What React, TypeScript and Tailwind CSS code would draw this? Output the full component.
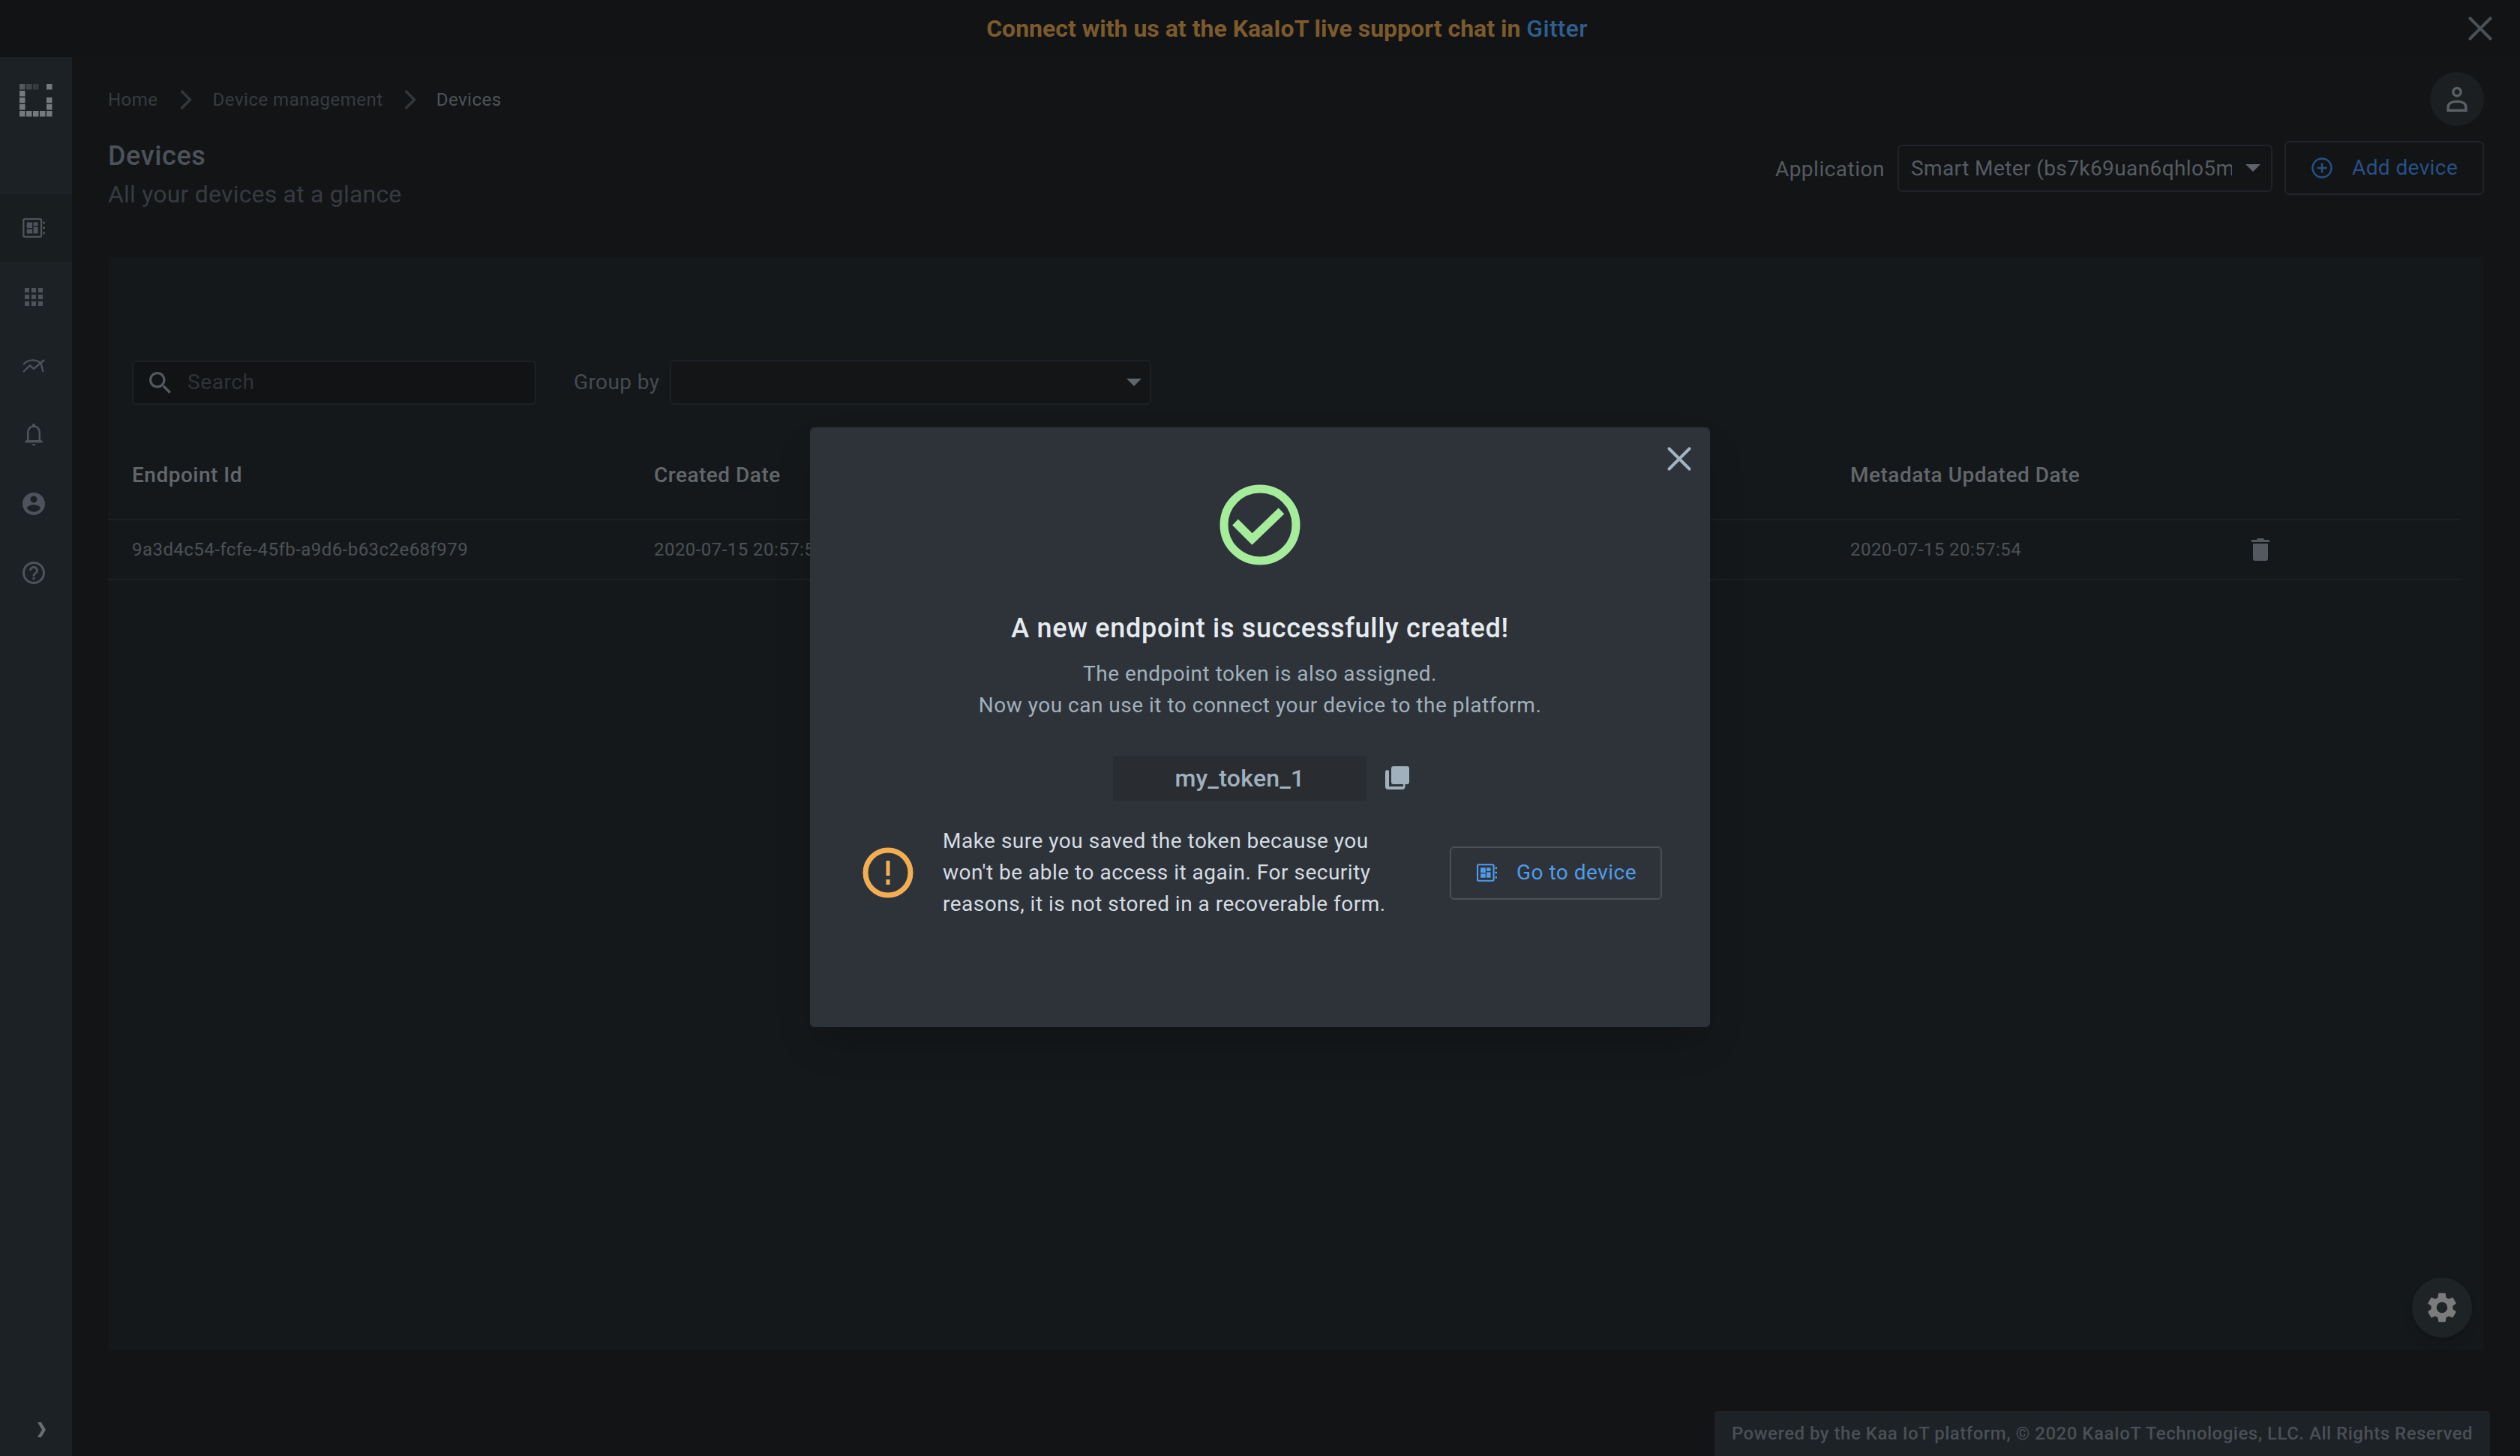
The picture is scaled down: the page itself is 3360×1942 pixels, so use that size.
import React from 'react';
import { X, ChevronRight } from 'lucide-react';

const FONT = "font-['Roboto',sans-serif]";

const BoardIcon = ({ className }: { className?: string }) => (
  <svg viewBox="0 0 32 28" className={className} fill="currentColor">
    <path fillRule="evenodd" d="M3 0h22a3 3 0 0 1 3 3v22a3 3 0 0 1-3 3H3a3 3 0 0 1-3-3V3a3 3 0 0 1 3-3Zm0 2.500a.5.5 0 0 0-.5.5v22a.5.5 0 0 0 .5.5h22a.5.5 0 0 0 .5-.5V3a.5.5 0 0 0-.5-.5H3Z" />
    <path d="M6 6h8v8H6zM15.500 6h6.500v5.500h-6.500zM15.500 13h6.500v9h-6.500zM6 15.500h8V22H6z" />
    <path d="M29 5h3v3h-3zM29 12.500h3v3h-3zM29 20h3v3h-3z" />
  </svg>
);

const GridIcon = () => (
  <svg viewBox="0 0 24 24" className="h-[24px] w-[24px]" fill="currentColor">
    <path d="M0 0h6v6H0zM9 0h6v6H9zM18 0h6v6h-6zM0 9h6v6H0zM9 9h6v6H9zM18 9h6v6h-6zM0 18h6v6H0zM9 18h6v6H9zM18 18h6v6h-6z" />
  </svg>
);

const TrendIcon = () => (
  <svg viewBox="0 0 30 20" className="h-[20px] w-[30px]" fill="none" stroke="currentColor" strokeWidth="2.400">
    <path d="M1 18 10 9.500l5 4.500L29 2" />
    <path d="M1 8C8 .5 20 .5 25 8l2.500 10" />
  </svg>
);

const BellIcon = () => (
  <svg viewBox="0 0 24 30" className="h-[30px] w-[24px]" fill="currentColor">
    <path fillRule="evenodd" d="M12 0a2 2 0 0 1 2 2.400c4.600 1 7 5 7 9.600v9l3 3v1.500H0V24l3-3v-9c0-4.600 2.400-8.600 7-9.600A2 2 0 0 1 12 0Zm0 5c-4.500 0-6.500 3.400-6.500 7v10h13V12c0-3.600-2-7-6.500-7Z" />
    <path d="M9 27h6l-3 3z" />
  </svg>
);

const UserCircleIcon = () => (
  <svg viewBox="2 2 20 20" className="h-[30px] w-[30px]" fill="currentColor">
    <path d="M12 2C6.480 2 2 6.480 2 12s4.480 10 10 10 10-4.480 10-10S17.520 2 12 2zm0 3c1.660 0 3 1.340 3 3s-1.340 3-3 3-3-1.340-3-3 1.340-3 3-3zm0 14.200c-2.500 0-4.710-1.280-6-3.220.03-1.990 4-3.080 6-3.080 1.990 0 5.970 1.090 6 3.080-1.290 1.940-3.500 3.220-6 3.220z" />
  </svg>
);

const HelpIcon = () => (
  <svg viewBox="2 2 20 20" className="h-[30px] w-[30px]" fill="currentColor">
    <path d="M11 18h2v-2h-2v2zm1-16C6.480 2 2 6.480 2 12s4.480 10 10 10 10-4.480 10-10S17.520 2 12 2zm0 18c-4.410 0-8-3.590-8-8s3.590-8 8-8 8 3.590 8 8-3.590 8-8 8zm0-14c-2.210 0-4 1.790-4 4h2c0-1.100.9-2 2-2s2 .9 2 2c0 2-3 1.750-3 5h2c0-2.250 3-2.500 3-5 0-2.210-1.790-4-4-4z" />
  </svg>
);

// dotted square: 5 x 5 cells, some dimmed
const Logo = () => {
  const bright = '#75797b';
  const cells = [
    [0, 0, '#55595b'], [1, 0, '#3e4447'], [2, 0, '#363b3e'], [4, 0, bright],
    [0, 1, bright], [0, 2, bright], [4, 2, bright], [0, 3, bright], [4, 3, bright],
    [0, 4, bright], [1, 4, bright], [2, 4, bright], [3, 4, bright], [4, 4, bright],
  ] as const;
  return (
    <svg viewBox="0 0 44 44" className="h-[44px] w-[44px]">
      {cells.map(([x, y, fill]) => (
        <rect key={`${x}-${y}`} x={x * 9} y={y * 9} width="7.500" height="7.500" fill={fill} />
      ))}
    </svg>
  );
};

const sideIcons = [
  <BoardIcon key="board" className="h-[26px] w-[30px]" />,
  <GridIcon key="grid" />,
  <TrendIcon key="trend" />,
  <BellIcon key="bell" />,
  <UserCircleIcon key="user" />,
  <HelpIcon key="help" />,
];

const Sidebar = () => (
  <aside className="relative flex h-full w-[96px] shrink-0 flex-col bg-[#1b2124] text-[#4c535a]">
    <div className="flex h-[92px] items-center pl-[26px] pt-[24px]">
      <Logo />
    </div>
    <div className="mt-[90px] flex flex-col">
      {sideIcons.map((icon, i) => (
        <div key={i} className={`flex h-[92px] w-full items-center justify-center pr-[6px] ${i === 0 ? 'bg-[#181d20]' : ''}`}>
          {icon}
        </div>
      ))}
    </div>
    <div className="mt-auto flex h-[66px] items-center pl-[50px] pb-[4px] text-[#6a6e72]">
      <svg viewBox="0 0 11 20" className="h-[20px] w-[11px]" fill="currentColor">
        <path d="M0 0h5l6 10-6 10H0l6-10z" />
      </svg>
    </div>
  </aside>
);

const Crumb = ({ children, current }: { children: React.ReactNode; current?: boolean }) => (
  <span className={`text-[24px] tracking-[0.5px] ${current ? 'text-[#4d5358]' : 'text-[#373c41]'}`}>{children}</span>
);

const Caret = ({ className }: { className?: string }) => (
  <svg viewBox="0 0 20 10" className={className} fill="currentColor">
    <path d="M0 0h20L10 10z" />
  </svg>
);

const Header = () => (
  <div className="flex flex-col">
    <div className="mr-[48px] flex h-[72px] items-center justify-between">
      <div className="mt-[2px] flex items-center">
        <Crumb>Home</Crumb>
        <ChevronRight size={44} strokeWidth={1.800} className="ml-[15px] mr-[14px] text-[#33383c]" />
        <Crumb>Device management</Crumb>
        <ChevronRight size={44} strokeWidth={1.800} className="ml-[14px] mr-[13px] text-[#33383c]" />
        <Crumb current>Devices</Crumb>
      </div>
      <div className="flex h-[72px] w-[72px] items-center justify-center rounded-full bg-[#1b1f22] text-[#5a6066]">
        <svg viewBox="0 0 32 40" className="h-[34px] w-[32px]" fill="none" stroke="currentColor" strokeWidth="4">
          <circle cx="16" cy="9" r="6" />
          <path d="M2 38v-5c0-6 6-9 14-9s14 3 14 9v5z" />
        </svg>
      </div>
    </div>
    <div className="mr-[48px] mt-[20px] flex h-[155px] items-start justify-between">
      <div>
        <h1 className="text-[36px] font-medium leading-[40px] tracking-[0.6px] text-[#4b5259]">Devices</h1>
        <p className="mt-[11px] text-[32px] leading-[40px] tracking-[0.2px] text-[#363b41]">All your devices at a glance</p>
      </div>
      <div className="flex items-center">
        <span className="mr-[17px] mt-[4px] text-[28px] tracking-[0.5px] text-[#555b60]">Application</span>
        <div className="flex h-[63px] w-[500px] items-center rounded-[6px] border-2 border-[#1f2327] pl-[16px] pr-[14px]">
          <span className="mt-[2px] w-[428px] overflow-hidden whitespace-nowrap text-[28px] tracking-[0.4px] text-[#565c62]">Smart Meter (bs7k69uan6qhlo5mm4ng)</span>
          <Caret className="ml-auto h-[10px] w-[20px] text-[#5e646a]" />
        </div>
        <button className="ml-[16px] flex h-[72px] w-[266px] items-center rounded-[6px] border-2 border-[#212529] pl-[34px] text-[#265187]">
          <svg viewBox="0 0 28 28" className="h-[28px] w-[28px]" fill="none" stroke="currentColor" strokeWidth="2.400">
            <circle cx="14" cy="14" r="12.500" />
            <path d="M14 7.500v13M7.500 14h13" />
          </svg>
          <span className="ml-[26px] text-[28px] tracking-[0.4px]">Add device</span>
        </button>
      </div>
    </div>
  </div>
);

const DevicesCard = () => (
  <section className="mr-[48px] h-[1457px] bg-[#15181b]">
    <div className="flex items-center pl-[32px] pt-[137px]">
      <div className="flex h-[59px] w-[539px] items-center rounded-[6px] border-2 border-[#1d2024] bg-[#121315] pl-[21px] text-[#52585e]">
        <svg viewBox="3 3 17.500 17.500" className="h-[29px] w-[29px]" fill="currentColor">
          <path d="M15.500 14h-.79l-.28-.27C15.410 12.590 16 11.110 16 9.500 16 5.910 13.090 3 9.500 3S3 5.910 3 9.500 5.910 16 9.500 16c1.610 0 3.090-.59 4.230-1.570l.27.28v.79l5 4.990L20.490 19l-4.990-5zm-6 0C7.010 14 5 11.990 5 9.500S7.010 5 9.500 5 14 7.010 14 9.500 11.990 14 9.500 14z" />
        </svg>
        <span className="ml-[22px] text-[28px] tracking-[0.6px] text-[#2f3337]">Search</span>
      </div>
      <span className="ml-[50px] text-[28px] tracking-[0.4px] text-[#464b50]">Group by</span>
      <div className="ml-[14px] flex h-[60px] w-[642px] items-center justify-end rounded-[6px] border-2 border-[#1d2024] bg-[#131517] pr-[11px]">
        <Caret className="h-[10px] w-[20px] text-[#5e646a]" />
      </div>
    </div>
    <div className="mr-[32px] mt-[35px] grid h-[119px] grid-cols-[696px_1595px_1fr] items-center border-b-2 border-[#1c2024] pl-[32px] text-[28px] font-medium tracking-[0.5px] text-[#62676b]">
      <span>Endpoint Id</span>
      <span>Created Date</span>
      <span>Metadata Updated Date</span>
    </div>
    <div className="mr-[32px] grid h-[80px] grid-cols-[696px_1595px_535px_1fr] items-center border-b-2 border-[#1c2024] pl-[32px] text-[24px] tracking-[0.45px] text-[#4c5156]">
      <span>9a3d4c54-fcfe-45fb-a9d6-b63c2e68f979</span>
      <span>2020-07-15 20:57:54</span>
      <span>2020-07-15 20:57:54</span>
      <svg viewBox="0 0 24 30" className="h-[30px] w-[24px] text-[#53595f]" fill="currentColor">
        <path d="M8 0h8l1 2h7v3H0V2h7zM2 7h20v20a3 3 0 0 1-3 3H5a3 3 0 0 1-3-3z" />
      </svg>
    </div>
  </section>
);

const EndpointModal = () => (
  <div className="absolute inset-0 flex items-center justify-center pb-[2px]">
    <div className="relative flex h-[800px] w-[1200px] flex-col items-center rounded-[6px] bg-[#2e333a] pt-[76px] shadow-2xl">
      <button className="absolute right-[14px] top-[15px] text-[#a3b3bf]">
        <X size={54} strokeWidth={1.800} />
      </button>
      <svg viewBox="0 0 108 108" className="h-[108px] w-[108px]" fill="none" stroke="#a5ec9b" strokeWidth="11">
        <circle cx="54" cy="54" r="48" />
        <path d="M21 50.500 43.500 73 82.500 35.500" />
      </svg>
      <h2 className="mt-[60px] text-[36px] font-medium leading-[48px] tracking-[0.7px] text-[#e6ebef]">A new endpoint is successfully created!</h2>
      <p className="mt-[16px] text-center text-[28px] leading-[42px] tracking-[0.5px] text-[#a2b0bb]">
        The endpoint token is also assigned.<br />
        Now you can use it to connect your device to the platform.
      </p>
      <div className="mt-[46px] flex w-full items-center pl-[404px]">
        <div className="flex h-[60px] w-[338px] items-center justify-center rounded-[4px] bg-[#292d31] text-[32px] font-medium tracking-[0.3px] text-[#a0b1bd]">my_token_1</div>
        <svg viewBox="0 0 32 32" className="ml-[25px] h-[32px] w-[32px] text-[#a0b1bd]" fill="currentColor">
          <rect x="8" y="0" width="24" height="24" rx="3" />
          <path d="M5 6v21h19v-2.500a1 1 0 0 1 2.500 0V27a4 4 0 0 1-3 4H4a4 4 0 0 1-4-4V8a3 3 0 0 1 3-3z" />
        </svg>
      </div>
      <div className="mt-[33px] flex w-full items-center pl-[70px]">
        <svg viewBox="0 0 68 68" className="h-[68px] w-[68px] shrink-0" fill="none" stroke="#f2ae51" strokeWidth="7">
          <circle cx="34" cy="34" r="30" />
          <path strokeWidth="5" d="M34 18v20M34 43v7" />
        </svg>
        <p className="ml-[39px] w-[640px] text-[28px] leading-[42px] tracking-[0.5px] text-[#d5dce2]">
          Make sure you saved the token because you<br />
          won't be able to access it again. For security<br />
          reasons, it is not stored in a recoverable form.
        </p>
        <button className="ml-[36px] flex h-[71px] w-[283px] items-center rounded-[6px] border-2 border-[#4a4f58] pl-[34px] text-[#4f9cec]">
          <BoardIcon className="h-[24px] w-[27px]" />
          <span className="ml-[26px] text-[28px] tracking-[0.5px]">Go to device</span>
        </button>
      </div>
    </div>
  </div>
);

export default function App() {
  return (
    <div className={`relative flex h-[1942px] w-[3360px] flex-col overflow-hidden bg-[#131416] ${FONT}`}>
      <div className="relative flex h-[76px] shrink-0 items-center justify-center bg-[#121314]">
        <p className="ml-[72px] text-[32px] font-bold text-[#7b5a2e]">
          Connect with us at the KaaIoT live support chat in <span className="font-medium tracking-[0.3px] text-[#2f5f8f]">Gitter</span>
        </p>
        <X size={54} strokeWidth={1.800} className="absolute right-[26px] top-[11px] text-[#4c5156]" />
      </div>
      <div className="flex min-h-0 flex-1">
        <Sidebar />
        <main className="flex min-w-0 flex-1 flex-col pl-[48px] pt-[20px]">
          <Header />
          <DevicesCard />
          <footer className="ml-auto mr-[40px] mt-[82px] flex h-[60px] w-[1034px] shrink-0 items-center justify-center rounded-t-[4px] bg-[#1c2225] text-[24px] font-medium tracking-[0.5px] text-[#4a4f56]">
            Powered by the Kaa IoT platform, © 2020 KaaIoT Technologies, LLC. All Rights Reserved
          </footer>
        </main>
      </div>
      <div className="absolute bottom-[158px] right-[64px] flex h-[80px] w-[80px] items-center justify-center rounded-full bg-[#1e2326] text-[#7b7b7b] shadow-lg">
        <svg viewBox="2 2 20 20" className="h-[40px] w-[40px]" fill="currentColor">
          <path d="M19.140 12.940c.04-.3.060-.61.060-.94 0-.32-.02-.64-.07-.94l2.030-1.580c.18-.14.230-.41.120-.61l-1.920-3.320c-.12-.22-.37-.29-.59-.22l-2.390.96c-.5-.38-1.030-.7-1.620-.94l-.36-2.540c-.04-.24-.24-.41-.48-.41h-3.840c-.24 0-.43.170-.47.410l-.36 2.540c-.59.240-1.130.570-1.620.940l-2.390-.96c-.22-.08-.47 0-.59.220L2.740 8.870c-.12.210-.08.470.12.610l2.030 1.580c-.05.3-.09.630-.09.940s.02.640.07.940l-2.030 1.580c-.18.140-.23.410-.12.610l1.920 3.320c.12.220.37.290.59.220l2.390-.96c.5.380 1.030.7 1.620.94l.36 2.540c.05.240.24.410.48.410h3.840c.24 0 .44-.17.470-.41l.36-2.540c.59-.24 1.130-.56 1.620-.94l2.390.96c.22.080.47 0 .59-.22l1.920-3.320c.12-.22.070-.47-.12-.61l-2.010-1.580zM12 15.600c-1.980 0-3.600-1.620-3.600-3.600s1.620-3.600 3.600-3.600 3.600 1.620 3.600 3.600-1.620 3.600-3.600 3.600z" />
        </svg>
      </div>
      <EndpointModal />
    </div>
  );
}
